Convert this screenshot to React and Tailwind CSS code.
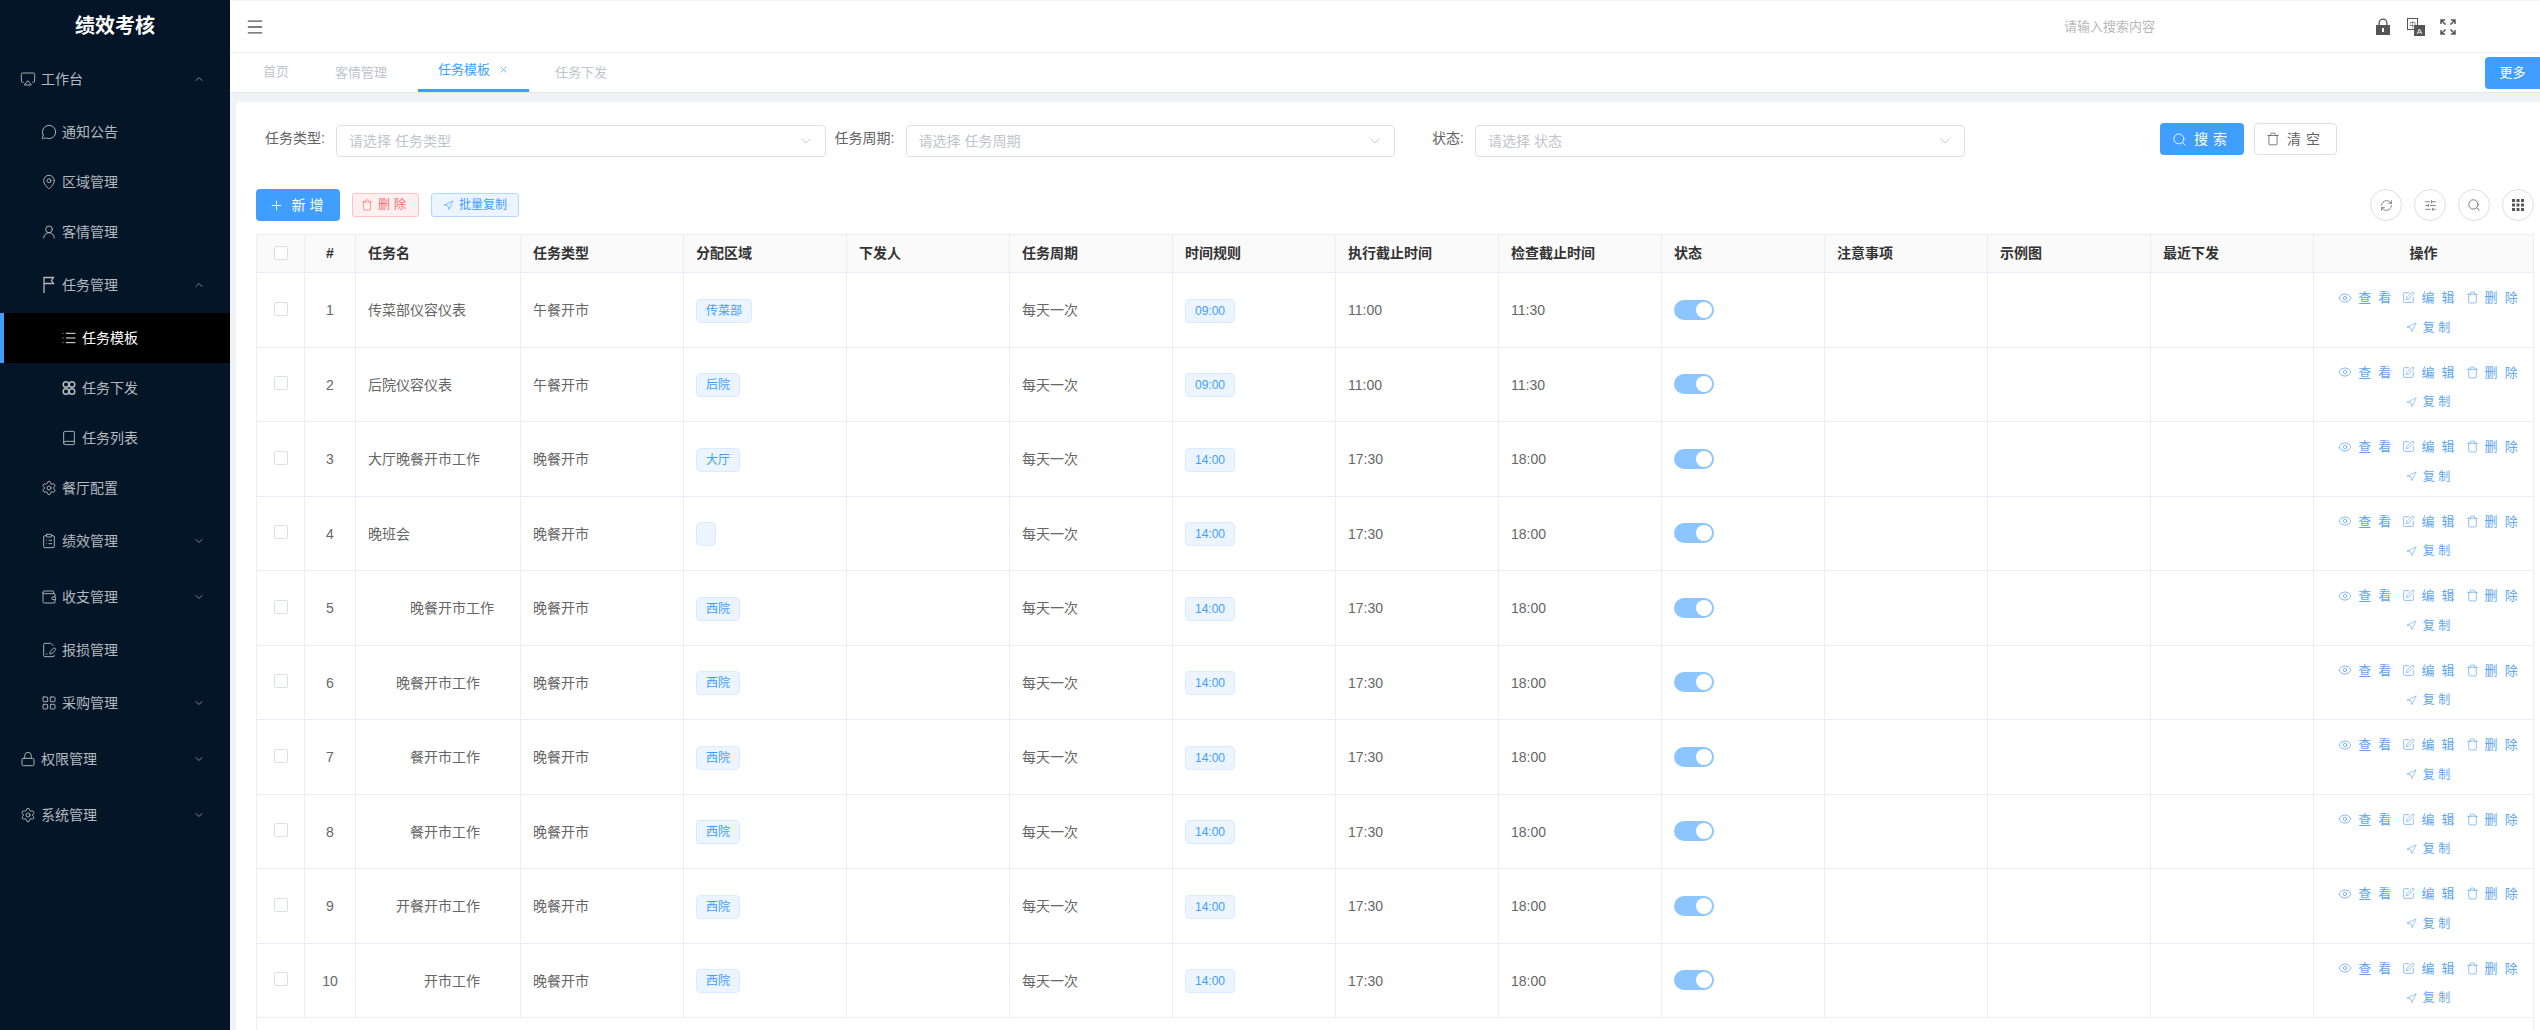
import {
  Airplay, MessageCircle, MapPin, UserRound, List, Book, Settings, ClipboardList, Wallet, FilePenLine,
  LayoutGrid, Lock, ChevronUp, ChevronDown, Plus, Trash, Navigation, Search, Eye, SquarePen, RefreshCw,
  SlidersHorizontal, Menu, X,
} from "lucide-react";

const FONT = "font-['Liberation_Sans','Noto_Sans_CJK_SC',sans-serif]";

// Flag icon of the task menu, lucide's one is too heavy
function FlagIcon() {
  return (
    <svg width="14" height="18" viewBox="0 0 14 18" fill="none" stroke="currentColor" strokeWidth="1.3">
      <path d="M2 17V1.5h9.5L9.5 4.5l2 3H2" />
    </svg>
  );
}

function RingsIcon() {
  return (
    <svg width="14" height="16" viewBox="0 0 14 16" fill="none" stroke="currentColor" strokeWidth="1.5">
      <circle cx="4" cy="4.5" r="2.8" />
      <circle cx="10" cy="4.5" r="2.8" />
      <circle cx="4" cy="11.5" r="2.8" />
      <circle cx="10" cy="11.5" r="2.8" />
    </svg>
  );
}

const menu = [
  { label: "工作台", Icon: Airplay, level: 1, arrow: "up" },
  { label: "通知公告", Icon: MessageCircle, level: 2 },
  { label: "区域管理", Icon: MapPin, level: 2 },
  { label: "客情管理", Icon: UserRound, level: 2 },
  { label: "任务管理", Icon: FlagIcon, level: 2, arrow: "up" },
  { label: "任务模板", Icon: List, level: 3, active: true },
  { label: "任务下发", Icon: RingsIcon, level: 3 },
  { label: "任务列表", Icon: Book, level: 3 },
  { label: "餐厅配置", Icon: Settings, level: 2 },
  { label: "绩效管理", Icon: ClipboardList, level: 2, arrow: "down" },
  { label: "收支管理", Icon: Wallet, level: 2, arrow: "down" },
  { label: "报损管理", Icon: FilePenLine, level: 2 },
  { label: "采购管理", Icon: LayoutGrid, level: 2, arrow: "down" },
  { label: "权限管理", Icon: Lock, level: 1, arrow: "down" },
  { label: "系统管理", Icon: Settings, level: 1, arrow: "down" },
];

const levelPad = { 1: "pl-[20px]", 2: "pl-[41px]", 3: "pl-[61px]" };

function MenuItem({ item }) {
  const { label, Icon, level, arrow, active } = item;
  return (
    <div
      className={`relative flex items-center gap-[5px] pr-[25px] text-[14px] ${levelPad[level]} ${arrow ? "h-[56px]" : "h-[50px]"} ${
        active ? "bg-black text-white" : "text-[#b4b9bf]"
      }`}
    >
      {active && <span className="absolute left-0 top-0 h-full w-[4px] bg-[#409eff]" />}
      <span className="flex w-[16px] justify-center">
        <Icon size={16} strokeWidth={1.4} />
      </span>
      <span>{label}</span>
      {arrow === "up" && <ChevronUp size={12} strokeWidth={1.4} className="ml-auto" />}
      {arrow === "down" && <ChevronDown size={12} strokeWidth={1.4} className="ml-auto" />}
    </div>
  );
}

function Sidebar() {
  return (
    <aside className="w-[230px] shrink-0 bg-[#031527] pt-px">
      <div className="flex h-[50px] items-center justify-center text-[20px] font-bold text-white">绩效考核</div>
      {menu.map((item) => (
        <MenuItem key={item.label} item={item} />
      ))}
    </aside>
  );
}

function HeaderBar() {
  return (
    <header className="flex h-[52px] items-center border-b border-[#f0f0f0] bg-white pl-[15px] text-[#555]">
      <Menu size={20} strokeWidth={1.6} />
      <span className="ml-[1799px] text-[13px] text-[#b8b8b8]">请输入搜索内容</span>
      <svg className="ml-[220px]" width="16" height="17" viewBox="0 0 16 17" fill="#555">
        <path d="M3.5 7V5a4.5 4.5 0 0 1 9 0v2h-1.3V5a3.2 3.2 0 0 0-6.4 0v2z" />
        <path fillRule="evenodd" d="M1 7h14v10H1zM7 10v4h2v-4z" />
      </svg>
      <svg className="ml-[16px]" width="18" height="18" viewBox="0 0 18 18">
        <rect x="0.5" y="0.5" width="10" height="11" fill="#fff" stroke="#555" />
        <text x="5.5" y="8.5" fontSize="7" textAnchor="middle" fill="#555">中</text>
        <rect x="7" y="7" width="11" height="11" fill="#555" />
        <text x="12.5" y="15.5" fontSize="8" textAnchor="middle" fill="#fff">A</text>
      </svg>
      <svg className="ml-[15px]" width="16" height="16" viewBox="0 0 16 16" fill="none" stroke="#555" strokeWidth="1.5">
        <path d="M1 5V1h4M1 1l4.5 4.5M11 1h4v4M15 1l-4.5 4.5M1 11v4h4M1 15l4.5-4.5M15 11v4h-4M15 15l-4.5-4.5" />
      </svg>
    </header>
  );
}

function TabsBar() {
  return (
    <div className="relative flex h-[40px] items-center border-b border-[#e6e6e6] bg-white text-[13px] text-[#c0c4cc]">
      <span className="ml-[33px] pb-[1px]">首页</span>
      <span className="ml-[46px]">客情管理</span>
      <span className="ml-[31px] flex h-full w-[111px] items-center border-b-[3px] border-[#409eff] pb-[3px] pl-[20px] text-[#409eff]">
        任务模板
        <X size={11} strokeWidth={1.4} className="ml-[8px]" />
      </span>
      <span className="ml-[26px]">任务下发</span>
      <span className="ml-auto flex h-[32px] w-[55px] items-center justify-center rounded-l-[4px] bg-[#409eff] text-white">更多</span>
    </div>
  );
}

function FilterSelect({ label, placeholder }) {
  return (
    <div className="flex w-[569.5px] items-start">
      <label className="w-[80px] pr-[11px] pt-[3px] text-right text-[14px] text-[#606266]">{label}:</label>
      <div className="flex h-[32px] w-[489.5px] items-center justify-between rounded-[4px] border border-[#dcdfe6] pl-[12px] pr-[11px] text-[14px] text-[#c0c4cc]">
        <span>{placeholder}</span>
        <ChevronDown size={16} strokeWidth={1.3} />
      </div>
    </div>
  );
}

function Filters() {
  return (
    <div className="flex items-start">
      <FilterSelect label="任务类型" placeholder="请选择 任务类型" />
      <FilterSelect label="任务周期" placeholder="请选择 任务周期" />
      <FilterSelect label="状态" placeholder="请选择 状态" />
      <button className="-mt-[2px] ml-[195.5px] flex h-[32px] w-[84px] items-center justify-center gap-[7px] rounded-[4px] bg-[#409eff] text-[14px] tracking-[5px] text-white">
        <Search size={15} strokeWidth={1.4} />
        搜索
      </button>
      <button className="-mt-[2px] ml-[10px] flex h-[32px] w-[83px] items-center justify-center gap-[7px] rounded-[4px] border border-[#dcdfe6] text-[14px] tracking-[5px] text-[#606266]">
        <Trash size={14} strokeWidth={1.4} />
        清空
      </button>
    </div>
  );
}

function GridIcon() {
  return (
    <svg width="12" height="12" viewBox="0 0 12 12" fill="#555">
      <rect x="0" y="0" width="3" height="3" />
      <rect x="4.5" y="0" width="3" height="3" />
      <rect x="9" y="0" width="3" height="3" />
      <rect x="0" y="4.5" width="3" height="3" />
      <rect x="4.5" y="4.5" width="3" height="3" />
      <rect x="9" y="4.5" width="3" height="3" />
      <rect x="0" y="9" width="3" height="3" />
      <rect x="4.5" y="9" width="3" height="3" />
      <rect x="9" y="9" width="3" height="3" />
    </svg>
  );
}

function CircleButton({ children }) {
  return (
    <button className="flex h-[32px] w-[32px] items-center justify-center rounded-full border border-[#dcdfe6] text-[#555]">
      {children}
    </button>
  );
}

function Toolbar() {
  return (
    <div className="mt-[32px] flex items-center">
      <button className="flex h-[32px] w-[84px] items-center justify-center gap-[8px] rounded-[4px] bg-[#409eff] text-[14px] tracking-[4px] text-white">
        <Plus size={15} strokeWidth={1.4} />
        新增
      </button>
      <button className="ml-[12px] flex h-[24px] w-[67px] items-center justify-center gap-[5px] rounded-[3px] border border-[#fbc4c4] bg-[#fef0f0] text-[12px] tracking-[4px] text-[#f56c6c]">
        <Trash size={12} strokeWidth={1.3} />
        删除
      </button>
      <button className="ml-[12px] flex h-[24px] w-[88px] items-center justify-center gap-[5px] rounded-[3px] border border-[#b3d8ff] bg-[#ecf5ff] text-[12px] text-[#409eff]">
        <Navigation size={11} strokeWidth={1.3} />
        批量复制
      </button>
      <div className="ml-auto flex gap-[12px]">
        <CircleButton><RefreshCw size={13} strokeWidth={1.3} /></CircleButton>
        <CircleButton><SlidersHorizontal size={13} strokeWidth={1.3} /></CircleButton>
        <CircleButton><Search size={14} strokeWidth={1.3} /></CircleButton>
        <CircleButton><GridIcon /></CircleButton>
      </div>
    </div>
  );
}

const columns = ["任务类型", "分配区域", "下发人", "任务周期", "时间规则", "执行截止时间", "检查截止时间", "状态", "注意事项", "示例图", "最近下发"];

const rows = [
  { name: "传菜部仪容仪表", pad: "pl-[12px]", type: "午餐开市", area: "传菜部", time: "09:00", end: "11:00", check: "11:30" },
  { name: "后院仪容仪表", pad: "pl-[12px]", type: "午餐开市", area: "后院", time: "09:00", end: "11:00", check: "11:30" },
  { name: "大厅晚餐开市工作", pad: "pl-[12px]", type: "晚餐开市", area: "大厅", time: "14:00", end: "17:30", check: "18:00" },
  { name: "晚班会", pad: "pl-[12px]", type: "晚餐开市", area: "", time: "14:00", end: "17:30", check: "18:00" },
  { name: "晚餐开市工作", pad: "pl-[54px]", type: "晚餐开市", area: "西院", time: "14:00", end: "17:30", check: "18:00" },
  { name: "晚餐开市工作", pad: "pl-[40px]", type: "晚餐开市", area: "西院", time: "14:00", end: "17:30", check: "18:00" },
  { name: "餐开市工作", pad: "pl-[54px]", type: "晚餐开市", area: "西院", time: "14:00", end: "17:30", check: "18:00" },
  { name: "餐开市工作", pad: "pl-[54px]", type: "晚餐开市", area: "西院", time: "14:00", end: "17:30", check: "18:00" },
  { name: "开餐开市工作", pad: "pl-[40px]", type: "晚餐开市", area: "西院", time: "14:00", end: "17:30", check: "18:00" },
  { name: "开市工作", pad: "pl-[68px]", type: "晚餐开市", area: "西院", time: "14:00", end: "17:30", check: "18:00" },
];

const rowGrid = "grid grid-cols-[48px_51px_165px_repeat(11,163px)_1fr]";
const headCell = "flex items-center border-r border-[#ebeef5] pl-[12px]";
const cell = "flex items-center border-r border-[#ebeef5] pl-[12px] pt-[2px]";

function Checkbox() {
  return <span className="mb-[2px] ml-[17px] block h-[14px] w-[14px] rounded-[2px] border border-[#dcdfe6] bg-white" />;
}

function Tag({ children }) {
  return (
    <span className="flex h-[24px] min-w-[20px] items-center rounded-[4px] border border-[#d9ecff] bg-[#ecf5ff] px-[9px] text-[12px] text-[#409eff]">
      {children}
    </span>
  );
}

function Action({ Icon, label, size = 14 }) {
  return (
    <span className="flex items-center gap-[6px] text-[#5ea6ef]">
      <Icon size={size} strokeWidth={1.3} />
      {label}
    </span>
  );
}

function TableRow({ row, index }) {
  return (
    <div className={`${rowGrid} h-[74.5px] border-b border-[#ebeef5] text-[14px] text-[#666]`}>
      <div className="flex items-center border-r border-[#ebeef5]"><Checkbox /></div>
      <div className="flex items-center justify-center border-r border-[#ebeef5] pt-[2px]">{index + 1}</div>
      <div className={`flex items-center border-r border-[#ebeef5] pt-[2px] ${row.pad}`}>{row.name}</div>
      <div className={cell}>{row.type}</div>
      <div className={cell}><Tag>{row.area}</Tag></div>
      <div className={cell} />
      <div className={cell}>每天一次</div>
      <div className={cell}><Tag>{row.time}</Tag></div>
      <div className={cell}>{row.end}</div>
      <div className={cell}>{row.check}</div>
      <div className={headCell}>
        <span className="flex h-[20px] w-[40px] items-center justify-end rounded-full bg-[#8cc5ff] pr-[2px]">
          <span className="h-[16px] w-[16px] rounded-full bg-white" />
        </span>
      </div>
      <div className={cell} />
      <div className={cell} />
      <div className={cell} />
      <div className="flex flex-col items-center justify-center pl-[9px] pt-[6px]">
        <div className="flex h-[30px] items-center gap-[11px] whitespace-pre text-[13px]">
          <Action Icon={Eye} label="查  看" />
          <Action Icon={SquarePen} label="编  辑" size={13} />
          <Action Icon={Trash} label="删  除" size={13} />
        </div>
        <div className="flex h-[30px] items-center whitespace-pre text-[12px]">
          <Action Icon={Navigation} label="复 制" size={11} />
        </div>
      </div>
    </div>
  );
}

function DataTable() {
  return (
    <div className="mt-[13px] flex-1 border-l border-r border-[#ebeef5]">
      <div className={`${rowGrid} h-[39px] border-y border-[#ebeef5] bg-[#fafafa] text-[14px] font-bold text-[#333]`}>
        <div className="flex items-center border-r border-[#ebeef5]"><Checkbox /></div>
        <div className="flex items-center justify-center border-r border-[#ebeef5]">#</div>
        <div className={headCell}>任务名</div>
        {columns.map((c) => (
          <div key={c} className={headCell}>{c}</div>
        ))}
        <div className="flex items-center justify-center">操作</div>
      </div>
      {rows.map((row, i) => (
        <TableRow key={i} row={row} index={i} />
      ))}
    </div>
  );
}

export default function App() {
  return (
    <div className={`flex h-[1030px] w-[2540px] overflow-hidden bg-[#f0f2f5] ${FONT}`}>
      <Sidebar />
      <main className="flex min-w-0 flex-1 flex-col pt-px">
        <HeaderBar />
        <TabsBar />
        <section className="ml-[6px] mt-[9px] flex flex-1 flex-col rounded-tl-[5px] bg-white pl-[20px] pr-[6px] pt-[23px]">
          <Filters />
          <Toolbar />
          <DataTable />
        </section>
      </main>
    </div>
  );
}
